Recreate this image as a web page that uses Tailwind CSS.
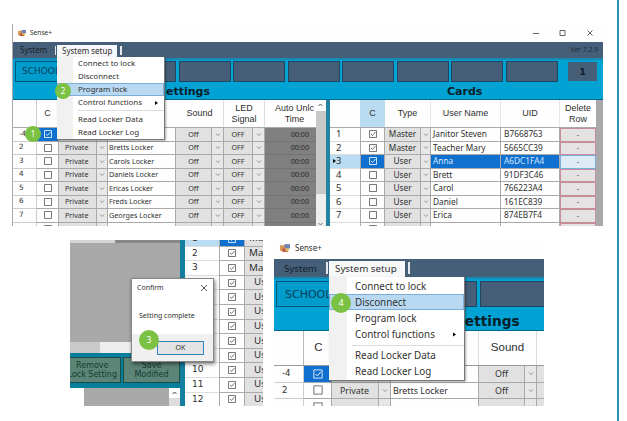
<!DOCTYPE html>
<html lang="en">
<head>
<meta charset="utf-8">
<title>Sense+</title>
<script src="https://cdn.jsdelivr.net/npm/@tailwindcss/browser@4"></script>
</head>
<body class="relative h-[421px] w-[627px] overflow-hidden bg-white font-['Noto_Sans','Open_Sans',sans-serif] text-[#303030] whitespace-nowrap">
<div class="absolute top-0 left-[617px] h-full w-[2px] bg-[#2496b8]"></div>

<!-- Main window -->
<section class="absolute top-[24px] left-[12px] flex h-[202px] w-[591px] flex-col overflow-hidden border-l border-[#aaa] bg-[#fefefe]">
  <header class="flex h-[18px] shrink-0 items-center pl-[5px]">
    <svg class="h-[8px] w-[8px]" viewBox="0 0 9 9"><path d="M0 2h5v5H0z" fill="#d99a55"/><path d="M4 1h5v4H4z" fill="#7287b5"/><path d="M2 5h5v3H2z" fill="#bf5942"/><path d="M5 5h3v2H5z" fill="#e8c34f"/></svg>
    <span class="ml-[4px] text-[6.6px]">Sense+</span>
    <svg class="ml-auto mr-[9px] h-[10px] w-[62px]" viewBox="0 0 62 10" fill="none" stroke="#555" stroke-width=".9"><path d="M1 5.5h6M28 2.5h5v5h-5zM55.500 2.500l5 5m0-5l-5 5"/></svg>
  </header>
  <nav class="flex h-[16px] shrink-0 items-center justify-between bg-[#465f78] pr-[5px] pl-[7px] text-[8px] text-[#13202d]">
    <span>System</span><span class="text-[6.8px] text-[#1d2c3b]">Ver 7.2.9</span>
  </nav>
  <div class="flex h-[42px] shrink-0 flex-col border-b border-[#08678c] bg-[#00a3d3]">
    <div class="flex h-[25px] items-center gap-[2.500px] border-t-2 border-[#1989b1] pl-[2px]" id="slots1">
      <b class="h-[21px] w-[52px] shrink-0 border border-[#07547b] bg-[#009ccc] pl-[6px] font-['DejaVu_Sans'] text-[9px] leading-[19px] font-normal text-[#073e5c]">SCHOOL</b>
    </div>
    <div class="flex h-[17px] font-['DejaVu_Sans'] text-[11px] leading-[19px] font-bold text-[#06202c]"><span class="w-[289px] shrink-0 pl-[145px]">Settings</span><span class="pl-[145px]">Cards</span></div>
  </div>
  <div class="flex h-[126px] shrink-0">
    <div class="w-[303px] shrink-0">
      <div class="flex h-[28px] border-b border-[#aaa] text-center font-['Liberation_Sans'] text-[9px] leading-[11px]">
        <span class="w-[24px] border-r border-[#ccc]"></span><span class="flex w-[22px] items-center justify-center border-r border-[#ddd]">C</span><span class="w-[117px]"></span>
        <span class="flex w-[48px] items-center justify-center border-r border-[#ddd]">Sound</span><span class="flex w-[41px] items-center justify-center border-r border-[#ddd] pt-[1px]">LED<br>Signal</span><span class="flex w-[51px] items-center justify-center pt-[1px]"><span class="pl-[8px]">Auto Unlc<br>Time</span></span>
      </div>
      <div id="lockers"></div>
    </div>
    <div class="flex w-[10px] shrink-0 flex-col bg-[#c8c8c8]"><svg class="h-[11px] w-[10px] bg-white" viewBox="0 0 10 11" fill="none" stroke="#555"><path d="M2.500 6l2-2 2 2"/></svg><div class="mt-auto flex h-[32px] items-end bg-[#eee]"><svg class="h-[4px] w-[10px]" viewBox="0 0 10 4" fill="none" stroke="#777"><path d="M2.500 1l2 2 2-2"/></svg></div></div>
    <div class="w-[4px] shrink-0 bg-[#2084a2]"></div>
    <div class="w-[266px] shrink-0">
      <div class="flex h-[28px] border-b border-[#aaa] text-center font-['Liberation_Sans'] text-[9px] leading-[11px]">
        <span class="w-[30px]"></span><span class="flex w-[25px] items-center justify-center bg-[#b9dcf3]">C</span><span class="flex w-[46px] items-center justify-center border-r border-[#e6e6e6]">Type</span><span class="flex w-[70px] items-center justify-center border-r border-[#e6e6e6]">User Name</span><span class="flex w-[59px] items-center justify-center border-r border-[#e6e6e6]">UID</span><span class="flex w-[36px] items-center justify-center">Delete<br>Row</span>
      </div>
      <div id="cards"></div>
    </div>
    <div class="grow bg-[#a9a9a9]"></div>
  </div>
</section>
<i class="absolute top-[46px] left-[54.500px] h-[9px] w-[1.500px] bg-[#e5e9ec]"></i>
<div class="absolute top-[45px] left-[57px] h-[13px] w-[60px] bg-[#f7f8f9] pl-[5px] text-[8px] leading-[12px]">System setup</div>
<i class="absolute top-[46px] left-[120px] h-[9px] w-[1.500px] bg-[#e5e9ec]"></i>
<div class="absolute top-[57px] left-[57px] flex h-[83px] w-[108px] flex-col border-r border-b border-[#777] bg-white bg-linear-to-r from-[#f1f1f1] from-15% to-white to-15% text-[7.900px] leading-[13px] shadow-[1px_1px_2px_#0005]">
  <span class="h-[13px] pl-[21px]">Connect to lock</span><span class="h-[13px] pl-[21px]">Disconnect</span><span class="h-[13px] bg-[#b9d9f2] pl-[21px] outline outline-[#7eaed5] -outline-offset-1">Program lock</span><span class="flex h-[13px] pl-[21px]">Control functions<svg class="ml-auto mt-[5px] mr-[6px] h-[4px] w-[3px]" viewBox="0 0 3 4"><path d="M0 0l3 2-3 2z"/></svg></span><i class="mt-[1px] mb-[1.500px] ml-[21px] h-[1px] shrink-0 bg-[#ddd]"></i><span class="h-[13px] pl-[21px]">Read Locker Data</span><span class="h-[13px] pl-[21px]">Read Locker Log</span>
</div>
<b class="absolute top-[126px] left-[25px] h-[16px] w-[16px] rounded-full bg-[#7bc143] text-center text-[8px] leading-[16px] font-normal text-white">1</b>
<b class="absolute top-[83px] left-[55px] h-[16px] w-[16px] rounded-full bg-[#7bc143] text-center text-[8px] leading-[16px] font-normal text-white">2</b>

<!-- Confirmation view -->
<section class="absolute top-[240px] left-[70px] flex h-[166px] w-[193px] overflow-hidden bg-white">
  <div class="flex w-[110px] shrink-0 flex-col">
    <div class="flex h-[3px] shrink-0"><i class="w-[45px] bg-[#d4d4d4]"></i><i class="grow bg-[#888]"></i></div>
    <div class="h-[99px] shrink-0 bg-[#a9a9a9]"></div>
    <div class="flex h-[11px] shrink-0 bg-[#eee]"><i class="w-[30px] bg-[#c9c9c9]"></i></div>
    <div class="flex h-[35px] shrink-0 gap-[2px] bg-[#087e9d] pt-[4px] pb-[5px] text-center font-['DejaVu_Sans'] text-[8px] leading-[9.500px] text-[#153b31]">
      <div class="flex w-[51px] shrink-0 items-center justify-end overflow-hidden border border-l-0 border-[#174e48] bg-[#5c8577] pr-[3px]"><span>Remove<br>Lock Setting</span></div><div class="flex w-[57px] items-center justify-center border border-[#174e48] bg-[#5c8577]"><span>Save<br>Modified</span></div>
    </div>
    <div class="flex grow"><i class="w-[14px]"></i><i class="w-[85px] bg-[#a9a9a9]"></i><div class="flex grow flex-col bg-[#ddd]"><svg class="h-[10px] w-full bg-white" viewBox="0 0 10 10" fill="none" stroke="#444"><path d="M3 6l2-2 2 2"/></svg></div></div>
  </div>
  <div class="w-[5px] shrink-0 bg-[#157f9f]"></div>
  <div class="-mt-[8px] grow" id="list"></div>
</section>
<div class="absolute top-[278px] left-[131px] flex h-[84px] w-[83px] flex-col border border-[#888] bg-white text-[7px] shadow-[1px_2px_4px_#0008]">
  <div class="flex h-[18px] items-center pl-[5px]">Confirm<svg class="ml-auto mr-[5px] h-[8px] w-[8px]" viewBox="0 0 8 8" fill="none" stroke="#444" stroke-width=".9"><path d="M1 1l6 6M7 1L1 7"/></svg></div>
  <div class="mt-[12px] h-[14px] pl-[7px] leading-[14px]">Setting complete</div>
  <div class="mt-auto flex h-[27px] items-center justify-end bg-[#f0f0f0] pr-[9px]"><span class="h-[14px] w-[47px] bg-[#e3e3e3] text-center leading-[14px] outline outline-[#2f86bd] -outline-offset-1">OK</span></div>
</div>
<b class="absolute top-[330px] left-[139px] h-[20px] w-[20px] rounded-full bg-[#7bc143] text-center text-[8.500px] leading-[20px] font-normal text-white">3</b>

<!-- Enlarged window -->
<section class="absolute top-[240px] left-[274px] flex h-[166px] w-[270px] flex-col overflow-hidden bg-[#fefefe]">
  <header class="flex h-[19px] shrink-0 items-center pl-[6px] pb-[4px]">
    <svg class="h-[10px] w-[10px]" viewBox="0 0 9 9"><path d="M0 2h5v5H0z" fill="#d99a55"/><path d="M4 1h5v4H4z" fill="#7287b5"/><path d="M2 5h5v3H2z" fill="#bf5942"/><path d="M5 5h3v2H5z" fill="#e8c34f"/></svg><span class="ml-[5px] text-[8px]">Sense+</span>
  </header>
  <nav class="h-[18px] shrink-0 bg-[#465f78] pl-[10px] text-[9.700px] leading-[20px] text-[#13202d]">System</nav>
  <div class="h-[54px] shrink-0 border-b border-[#08678c] bg-[#00a3d3]">
    <div class="flex h-[31px] items-center gap-[3px] border-t-2 border-[#1989b1] pl-[2px]"><b class="h-[26px] w-[65px] shrink-0 border border-[#07547b] bg-[#009ccc] pl-[8px] font-['DejaVu_Sans'] text-[11px] leading-[25px] font-normal text-[#073e5c]">SCHOOL</b><i class="h-[26px] w-[65px] shrink-0 border border-[#1e4663] bg-[#465f78]"></i><i class="h-[26px] w-[65px] shrink-0 border border-[#1e4663] bg-[#465f78]"></i><i class="h-[26px] w-[65px] shrink-0 border border-[#1e4663] bg-[#465f78]"></i></div>
    <div class="pl-[181px] font-['DejaVu_Sans'] text-[13.700px] leading-[26px] font-bold text-[#06202c]">Settings</div>
  </div>
  <div class="flex h-[35px] shrink-0 border-b border-[#999] font-['Liberation_Sans'] text-[11.500px]"><span class="w-[30px] border-r border-[#bbb]"></span><span class="flex w-[29px] items-center justify-center">C</span><span class="w-[146px] border-r border-[#ddd]"></span><span class="flex w-[58px] items-center justify-center border-r border-[#ddd]">Sound</span></div>
  <div id="zoomed"></div>
</section>
<i class="absolute top-[262px] left-[326px] h-[12px] w-[1.500px] bg-[#e5e9ec]"></i>
<div class="absolute top-[261px] left-[329px] h-[17px] w-[76px] bg-[#f7f8f9] pl-[6px] text-[9.800px] leading-[16px]">System setup</div>
<i class="absolute top-[262px] left-[408px] h-[12px] w-[1.500px] bg-[#e5e9ec]"></i>
<div class="absolute top-[277px] left-[329px] flex h-[104px] w-[136px] flex-col border-r border-b border-[#777] bg-white bg-linear-to-r from-[#f1f1f1] from-13% to-white to-13% pt-[1px] text-[9.850px] leading-[16px] shadow-[1px_1px_2px_#0005]">
  <span class="h-[16px] pl-[26px]">Connect to lock</span><span class="h-[16px] bg-[#b9d9f2] pl-[26px] outline outline-[#7eaed5] -outline-offset-1">Disconnect</span><span class="h-[16px] pl-[26px]">Program lock</span><span class="flex h-[16px] pl-[26px]">Control functions<svg class="ml-auto mt-[6px] mr-[8px] h-[5px] w-[3px]" viewBox="0 0 3 4"><path d="M0 0l3 2-3 2z"/></svg></span><i class="mt-[3px] mb-[1px] ml-[23px] h-[1px] shrink-0 bg-[#ddd]"></i><span class="h-[16px] pl-[26px]">Read Locker Data</span><span class="h-[16px] pl-[26px]">Read Locker Log</span>
</div>
<b class="absolute top-[293px] left-[331px] h-[20px] w-[20px] rounded-full bg-[#7bc143] text-center text-[9px] leading-[20px] font-normal text-white">4</b>

<script>
const box = (on, blue) => `<svg class="h-[8px] w-[8px]" viewBox="0 0 8 8" fill="none" stroke="${blue ? '#fff' : '#555'}" stroke-width=".8"><path d="M.5.5h7v7h-7z"/>${on ? '<path d="M2 4l1.500 1.500L6.500 2"/>' : ''}</svg>`;
const arrow = '<svg class="h-[5px] w-[6px]" viewBox="0 0 6 5" fill="none" stroke="#888" stroke-width=".9"><path d="M1 1.500l2 2 2-2"/></svg>';
const cell = 'flex shrink-0 items-center border-r border-b border-[#a9a9a9] ';
const mid = cell + 'justify-center ';
const get = id => document.getElementById(id);
get('slots1').innerHTML += '<i class="h-[21px] w-[52px] shrink-0 border border-[#1e4663] bg-[#465f78]"></i>'.repeat(9) + '<b class="ml-[8px] h-[19px] w-[29px] shrink-0 bg-[#465f78] text-center font-[\'DejaVu_Sans\'] text-[9.500px] leading-[20px] text-[#101d2b]">1</b>';
const names = ['Annas Locker', 'Bretts Locker', 'Carols Locker', 'Daniels Locker', 'Ericas Locker', 'Freds Locker', 'Georges Locker', ''];
// The last row is only partly in view, so it carries cells without labels.
get('lockers').innerHTML = names.map((n, i) => `<div class="flex h-[13.500px] text-[7.200px]"><span class="flex w-[24px] shrink-0 items-center border-r border-b border-[#ccc] pl-[6px] font-['DejaVu_Sans']">${i ? (n ? i + 1 : '') : '-4'}</span><span class="${mid} w-[22px] ${i ? '' : 'bg-[#0f70cf]'}">${box(!i, !i)}</span><span class="${cell} w-[38px] bg-[#e1e1e1] pl-[6px]">${i && n ? 'Private' : ''}</span><span class="${mid} w-[11px] bg-[#e8e8e8]">${arrow}</span><span class="${cell} w-[68px] pl-[1px]">${i ? n : ''}</span><span class="${mid} w-[36px] bg-[#e1e1e1]">${n ? 'Off' : ''}</span><span class="${mid} w-[12px] bg-[#e8e8e8]">${arrow}</span><span class="${mid} w-[29px] bg-[#e1e1e1]">${n ? 'OFF' : ''}</span><span class="${mid} w-[12px] bg-[#e8e8e8]">${arrow}</span><span class="flex w-[51px] shrink-0 items-center justify-end border-b border-[#747474] bg-[#808080] pr-[7px] text-[#282828]">${n ? '00:00' : ''}</span></div>`).join('');
const people = [['Janitor Steven','B7668763'],['Teacher Mary','5665CC39'],['Anna','A6DC1FA4'],['Brett','91DF3C46'],['Carol','766223A4'],['Daniel','161EC839'],['Erica','874EB7F4'],['','']];
get('cards').innerHTML = people.map(([n, uid], i) => { const s = i === 2; const sel = s ? 'bg-[#0f70cf] text-[#d5eaff] ' : ''; return `<div class="flex h-[13.500px] text-[8.300px]"><span class="relative flex w-[30px] shrink-0 items-center border-b border-[#ddd] pl-[6px] text-[9.500px] ${s ? 'bg-[#b9dcf3]' : ''}">${s ? '<svg class="absolute left-[3px] h-[4px] w-[3px]" viewBox="0 0 3 4"><path d="M0 0l3 2-3 2z"/></svg>' : ''}${n ? i + 1 : ''}</span><span class="${mid} w-[25px] border-l ${sel}">${box(i < 3, s)}</span><span class="${mid} w-[36px] bg-[#e1e1e1]">${n ? (i < 2 ? 'Master' : 'User') : ''}</span><span class="${mid} w-[10px] bg-[#e8e8e8]">${arrow}</span><span class="${cell} w-[70px] pl-[2px] ${sel}">${n}</span><span class="${cell} w-[59px] pl-[3px] ${sel}">${uid}</span><span class="flex w-[36px] shrink-0 items-center justify-center border ${s ? 'border-[#79aeda] bg-[#dcebf5]' : 'border-[#c78d98] bg-[#e5e2e3]'} text-[7px]">${n ? '-' : ''}</span></div>`; }).join('');
get('list').innerHTML = Array.from({length: 12}, (_, i) => `<div class="flex h-[14.600px] text-[9.800px]"><span class="flex w-[34px] shrink-0 items-center border-b border-[#ddd] pl-[7px] font-['DejaVu_Sans'] text-[9px] ${i ? '' : 'bg-[#b9dcf3]'}">${i + 1}</span><span class="${mid} w-[26px] border-l ${i ? '' : 'bg-[#0f70cf]'}">${box(true, !i)}</span><span class="flex w-[40px] shrink-0 items-center border-b border-[#a9a9a9] bg-[#e1e1e1] ${i < 3 ? 'pl-[4px]' : 'pl-[9px]'}">${i < 3 ? 'Master' : 'User'}</span></div>`).join('');
get('zoomed').innerHTML = names.slice(0, 3).map((n, i) => `<div class="flex h-[16.500px] text-[8.900px]"><span class="flex w-[30px] shrink-0 items-center border-r border-b border-[#ccc] pl-[8px] font-['DejaVu_Sans'] text-[8.500px]">${i === 2 ? '' : i ? 2 : '-4'}</span><span class="${mid} w-[28px] ${i ? '' : 'bg-[#0f70cf]'}"><span class="scale-[1.200]">${box(!i, !i)}</span></span><span class="${cell} w-[47px] bg-[#e1e1e1] pl-[8px]">${i === 1 ? 'Private' : ''}</span><span class="${mid} w-[12px] bg-[#e8e8e8]">${arrow}</span><span class="${cell} w-[88px] pl-[2px]">${i === 1 ? n : ''}</span><span class="${mid} w-[46px] bg-[#e1e1e1]">${i < 2 ? 'Off' : ''}</span><span class="${mid} w-[12px] bg-[#e8e8e8]">${arrow}</span><span class="${cell} w-[20px] bg-[#e1e1e1]"></span></div>`).join('');
</script>
</body>
</html>
